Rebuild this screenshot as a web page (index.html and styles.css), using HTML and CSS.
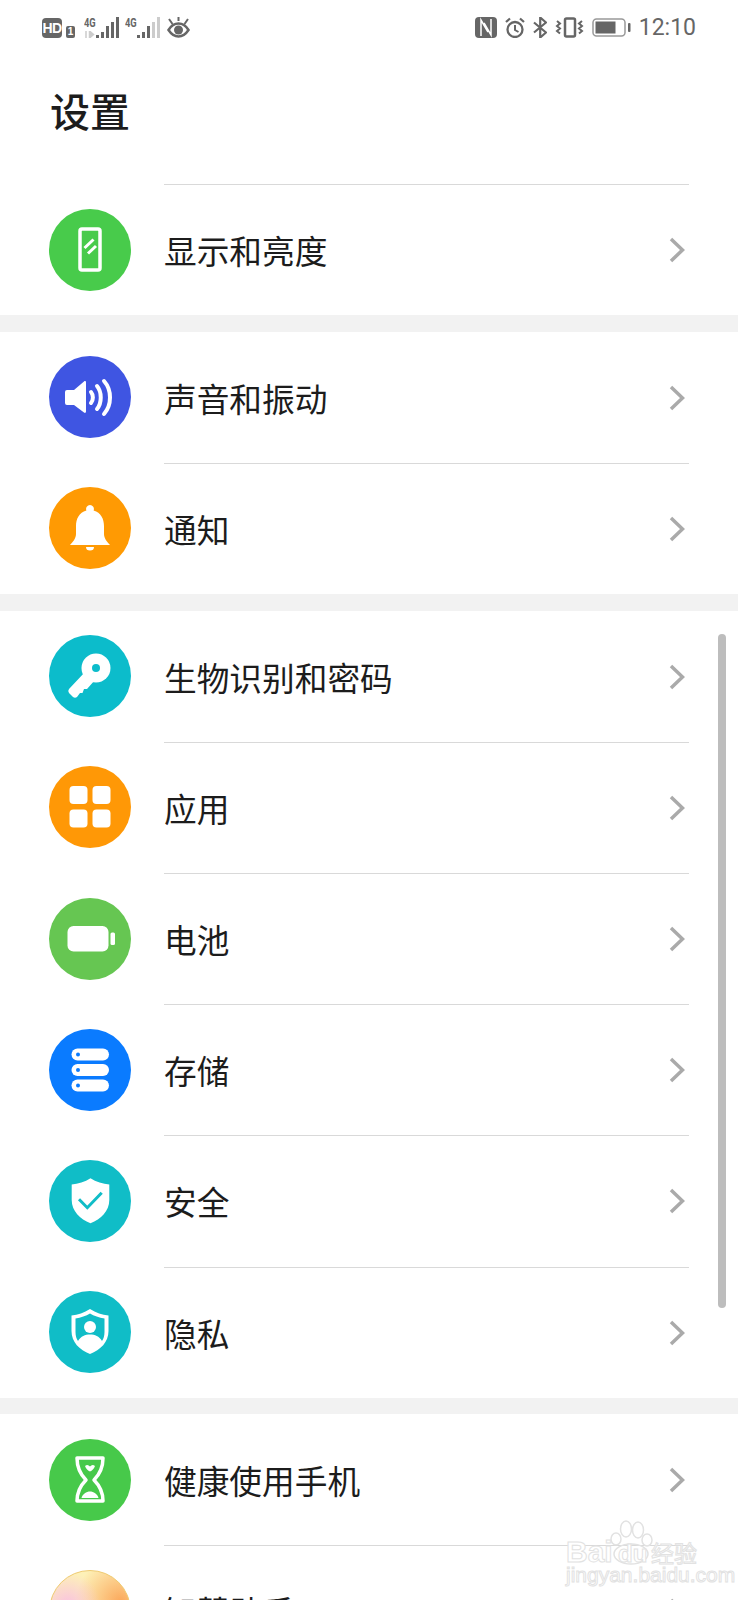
FILE: index.html
```html
<!DOCTYPE html>
<html>

<head>
    <title>设置</title>
    <link rel="stylesheet" href="styles.css">
</head>

<body>
    <div class="pantalla">
        <div class="estado">
            <div class="estadoIzq">
                <span class="hd">HD</span>
                <span class="sim">1</span>
                <div class="red">
                    <div class="redTexto">
                        <span class="cuatroG">4G</span>
                        <svg width="11" height="7" viewBox="0 0 11 7">
                            <path d="M2 0v7M5.5 0v7l4-3.500z" stroke="#ccc" stroke-width="1.5" fill="#ccc" />
                        </svg>
                    </div>
                    <svg width="23" height="21" viewBox="0 0 23 21" fill="#666">
                        <rect x="0" y="18" width="3" height="3" />
                        <rect x="5" y="15" width="3" height="6" />
                        <rect x="10" y="9" width="3" height="12" />
                        <rect x="15" y="5" width="3" height="16" />
                        <rect x="20" y="0" width="3" height="21" />
                    </svg>
                </div>
                <div class="red">
                    <div class="redTexto">
                        <span class="cuatroG">4G</span>
                    </div>
                    <svg width="23" height="21" viewBox="0 0 23 21" fill="#666">
                        <rect x="0" y="18" width="3" height="3" />
                        <rect x="5" y="15" width="3" height="6" />
                        <rect x="10" y="9" width="3" height="12" />
                        <rect x="15" y="5" width="3" height="16" fill="#ccc" />
                        <rect x="20" y="0" width="3" height="21" fill="#ccc" />
                    </svg>
                </div>
                <svg width="23" height="21" viewBox="0 0 23 21" fill="none" stroke="#666" stroke-width="2.5">
                    <path d="M1.500 13C4.500 8 8 6.500 11.500 6.500S18.500 8 21.500 13c-3 4.500-6.500 6.500-10 6.500S4.500 17.500 1.500 13z" />
                    <circle cx="11.500" cy="13" r="4.500" fill="#666" stroke="none" />
                    <path d="M2 2l3.500 5M11.500 0v4M21 2l-3.500 5" stroke-width="2" />
                </svg>
            </div>
            <div class="estadoDer">
                <svg width="22" height="21" viewBox="0 0 22 21">
                    <rect x="0" y="0" width="22" height="21" rx="4" fill="#666" />
                    <path d="M6 19V3l7 12M16 2v16L9 6" fill="none" stroke="#fff" stroke-width="1.5" />
                </svg>
                <svg width="20" height="21" viewBox="0 0 20 21" fill="none" stroke="#666" stroke-width="2.3">
                    <circle cx="10" cy="12.500" r="7.500" />
                    <path d="M10 8v5l3.500 2" stroke-width="2" />
                    <path d="M1 5l4-3.500M19 5l-4-3.500" />
                </svg>
                <svg width="14" height="21" viewBox="0 0 14 21" fill="none" stroke="#666" stroke-width="2.2">
                    <path d="M1 5.500l12 10-5.800 5V.5L13 5.500l-12 10" />
                </svg>
                <svg width="29" height="21" viewBox="0 0 29 21" fill="none" stroke="#666" stroke-width="2.5">
                    <rect x="10" y="1.500" width="10" height="18" rx="1.500" />
                    <path d="M2 4l3 2.500-3 2.500 3 2.500-3 2.500 3 2.500M27 4l-3 2.500 3 2.500-3 2.500 3 2.500-3 2.500" stroke-width="2" />
                </svg>
                <svg width="39" height="19" viewBox="0 0 39 19">
                    <rect x="1" y="1" width="32" height="17" rx="3.500" fill="none" stroke="#999" stroke-width="1.5" />
                    <rect x="3.500" y="3.500" width="20" height="12" fill="#666" />
                    <rect x="36" y="5" width="2.500" height="9" rx="1" fill="#666" />
                </svg>
                <span class="hora">12:10</span>
            </div>
        </div>

        <h1 class="titulo">设置</h1>

        <div class="grupo">
            <div class="fila">
                <svg class="icono" viewBox="0 0 82 82">
                    <circle cx="41" cy="41" r="41" fill="#48cb4b" />
                    <rect x="31" y="20" width="20" height="41" rx="2" fill="none" stroke="#fff" stroke-width="3.5" />
                    <path d="M35.500 39l9-8.500M39 44.500l8-7.500" stroke="#fff" stroke-width="3" />
                </svg>
                <div class="cuerpo">
                    <span class="nombre">显示和亮度</span>
                    <svg class="flecha" viewBox="0 0 16 26"><path d="M2 2l11.500 11L2 24" /></svg>
                </div>
            </div>
        </div>

        <div class="grupo">
            <div class="fila primera">
                <svg class="icono" viewBox="0 0 82 82">
                    <circle cx="41" cy="41" r="41" fill="#3f55e2" />
                    <path d="M18 34h7l10-8.500c1-.8 2-.3 2 1v29c0 1.300-1 1.800-2 1L25 49h-7a2 2 0 0 1-2-2V36a2 2 0 0 1 2-2z" fill="#fff" />
                    <path d="M42 36c2.500 3 2.500 8 0 11M48 30c5 6 5 17 0 23M55 25c8 9 8 24 0 33" fill="none" stroke="#fff" stroke-width="4" stroke-linecap="round" />
                </svg>
                <div class="cuerpo">
                    <span class="nombre">声音和振动</span>
                    <svg class="flecha" viewBox="0 0 16 26"><path d="M2 2l11.500 11L2 24" /></svg>
                </div>
            </div>
            <div class="fila">
                <svg class="icono" viewBox="0 0 82 82">
                    <circle cx="41" cy="41" r="41" fill="#ff9a03" />
                    <path d="M41 18a4 4 0 0 1 3.600 5.500C52 25.500 55 32 55 39v8c0 4 3 8 6 11H21c3-3 6-7 6-11v-8c0-7 3-13.500 10.400-15.500A4 4 0 0 1 41 18z" fill="#fff" />
                    <path d="M37 60h8a4 3.500 0 0 1-8 0z" fill="#fff" />
                </svg>
                <div class="cuerpo">
                    <span class="nombre">通知</span>
                    <svg class="flecha" viewBox="0 0 16 26"><path d="M2 2l11.500 11L2 24" /></svg>
                </div>
            </div>
        </div>

        <div class="grupo">
            <div class="fila primera">
                <svg class="icono" viewBox="0 0 82 82">
                    <circle cx="41" cy="41" r="41" fill="#0cbccb" />
                    <circle cx="47" cy="33" r="14.500" fill="#fff" />
                    <path d="M36 37L20 54q-1.500 2 0 4l4 4q2 1.500 4 0l3-4h2.500l1.500-4h3l8-9z" fill="#fff" />
                    <circle cx="47" cy="33" r="4" fill="#0cbccb" />
                </svg>
                <div class="cuerpo">
                    <span class="nombre">生物识别和密码</span>
                    <svg class="flecha" viewBox="0 0 16 26"><path d="M2 2l11.500 11L2 24" /></svg>
                </div>
            </div>
            <div class="fila">
                <svg class="icono" viewBox="0 0 82 82" fill="#fff">
                    <circle cx="41" cy="41" r="41" fill="#ff9806" />
                    <rect x="20.500" y="20" width="18" height="18" rx="4" />
                    <rect x="43.500" y="20" width="18" height="18" rx="4" />
                    <rect x="20.500" y="43.500" width="18" height="18" rx="4" />
                    <rect x="43.500" y="43.500" width="18" height="18" rx="4" />
                </svg>
                <div class="cuerpo">
                    <span class="nombre">应用</span>
                    <svg class="flecha" viewBox="0 0 16 26"><path d="M2 2l11.500 11L2 24" /></svg>
                </div>
            </div>
            <div class="fila">
                <svg class="icono" viewBox="0 0 82 82" fill="#fff">
                    <circle cx="41" cy="41" r="41" fill="#66c652" />
                    <rect x="18.500" y="28" width="41" height="25.500" rx="6" />
                    <rect x="61.500" y="34.500" width="4.500" height="12.500" rx="1.500" />
                </svg>
                <div class="cuerpo">
                    <span class="nombre">电池</span>
                    <svg class="flecha" viewBox="0 0 16 26"><path d="M2 2l11.500 11L2 24" /></svg>
                </div>
            </div>
            <div class="fila">
                <svg class="icono" viewBox="0 0 82 82" fill="#fff">
                    <circle cx="41" cy="41" r="41" fill="#0a7bff" />
                    <rect x="22.500" y="19.500" width="37.500" height="12" rx="6" />
                    <rect x="22.500" y="35" width="37.500" height="12" rx="6" />
                    <rect x="22.500" y="50.500" width="37.500" height="12" rx="6" />
                    <circle cx="29" cy="25.500" r="2" fill="#0a7bff" />
                    <circle cx="29" cy="41" r="2" fill="#0a7bff" />
                    <circle cx="29" cy="56.500" r="2" fill="#0a7bff" />
                </svg>
                <div class="cuerpo">
                    <span class="nombre">存储</span>
                    <svg class="flecha" viewBox="0 0 16 26"><path d="M2 2l11.500 11L2 24" /></svg>
                </div>
            </div>
            <div class="fila">
                <svg class="icono" viewBox="0 0 82 82">
                    <circle cx="41" cy="41" r="41" fill="#10bdc7" />
                    <path d="M41.500 18.300C47 22 54 24 60.300 24.500V40C60.300 51 52 59 41.500 63.300 31 59 22.700 51 22.700 40V24.500C29 24 36 22 41.500 18.300z" fill="#fff" />
                    <path d="M30 39.300l8.300 8.400 14.400-15" fill="none" stroke="#10bdc7" stroke-width="3" />
                </svg>
                <div class="cuerpo">
                    <span class="nombre">安全</span>
                    <svg class="flecha" viewBox="0 0 16 26"><path d="M2 2l11.500 11L2 24" /></svg>
                </div>
            </div>
            <div class="fila">
                <svg class="icono" viewBox="0 0 82 82">
                    <circle cx="41" cy="41" r="41" fill="#10bdc7" />
                    <path d="M41 18C47 22 53 23.500 59.500 24.500V40C59.500 51 51.500 59 41 63 30.500 59 22.500 51 22.500 40V24.500C29 23.500 35 22 41 18z" fill="#fff" />
                    <path d="M41 22.500C45 25 50 26.500 55.500 27.500V41C55.500 45 54.500 48 53 50 50 45 46 43.500 41 43.500 36 43.500 32 45 29 50 27.500 48 26.500 45 26.500 41V27.500C32 26.500 37 25 41 22.500z" fill="#10bdc7" />
                    <circle cx="41" cy="36" r="6" fill="#fff" />
                </svg>
                <div class="cuerpo">
                    <span class="nombre">隐私</span>
                    <svg class="flecha" viewBox="0 0 16 26"><path d="M2 2l11.500 11L2 24" /></svg>
                </div>
            </div>
        </div>

        <div class="grupo">
            <div class="fila primera">
                <svg class="icono" viewBox="0 0 82 82">
                    <circle cx="41" cy="41" r="41" fill="#47c94a" />
                    <path d="M28 19H54C54 29 50 36 45 41 50 46 54 53 54 62H28C28 53 32 46 37 41 32 36 28 29 28 19z" fill="none" stroke="#fff" stroke-width="3.500" stroke-linejoin="round" />
                    <path d="M36 27c2-1.500 3.500-1 5 .5 1.500-1.500 3-2 5-.5-1 3-3 4.500-5 5.500-2-1-4-2.500-5-5.500z" fill="#fff" />
                    <path d="M32.500 59c1-4 5-6.500 8.500-6.500s7.500 2.500 8.500 6.500z" fill="#fff" />
                </svg>
                <div class="cuerpo">
                    <span class="nombre">健康使用手机</span>
                    <svg class="flecha" viewBox="0 0 16 26"><path d="M2 2l11.500 11L2 24" /></svg>
                </div>
            </div>
            <div class="fila">
                <div class="icono bola"></div>
                <div class="cuerpo">
                    <span class="nombre">智慧助手</span>
                    <svg class="flecha" viewBox="0 0 16 26"><path d="M2 2l11.500 11L2 24" /></svg>
                </div>
            </div>
        </div>

        <div class="scroll"></div>

        <div class="marca">
            <svg class="huella" width="44" height="46" viewBox="0 0 44 46" fill="#fff" stroke="#e2e2e2" stroke-width="1.5">
                <ellipse cx="6" cy="19" rx="5" ry="6" />
                <ellipse cx="16" cy="9" rx="5.500" ry="8" />
                <ellipse cx="28" cy="10" rx="5.500" ry="8" />
                <ellipse cx="37" cy="20" rx="5" ry="6" />
                <ellipse cx="21" cy="34" rx="17" ry="10" fill="none" />
            </svg>
            <div class="marcaFila">
                <span class="bai">Bai</span><span class="du">du</span><span class="jing">经验</span>
            </div>
            <div class="marcaUrl">jingyan.baidu.com</div>
        </div>
    </div>
</body>

</html>
```
FILE: styles.css
```css
html,
body {
    margin: 0;
    padding: 0;
    background-color: #fff;
}

.pantalla {
    position: relative;
    width: 738px;
    height: 1600px;
    overflow: hidden;
    background-color: #f2f2f2;
    font-family: "Noto Sans CJK SC", "Noto Sans", sans-serif;
    color: #1c1c1c;
}

/* barra de estado */
.estado {
    display: flex;
    justify-content: space-between;
    align-items: center;
    height: 21px;
    padding: 17px 42px 0 42px;
    background-color: #fff;
}

.estadoIzq,
.estadoDer {
    display: flex;
    align-items: center;
}

.estadoDer {
    gap: 8px;
}

.hd {
    width: 20px;
    height: 20px;
    border-radius: 4px;
    background-color: #666;
    color: #fff;
    font: bold 14px/20px "Liberation Sans", sans-serif;
    letter-spacing: -0.5px;
    text-align: center;
}

.sim {
    width: 9px;
    height: 12px;
    margin: 8px 9px 0 4px;
    border-radius: 2px;
    background-color: #666;
    color: #fff;
    font: bold 10px/12px "Liberation Sans", sans-serif;
    text-align: center;
}

.red {
    display: flex;
    align-items: flex-end;
    margin-right: 6px;
}

.red + .red {
    margin-right: 7px;
}

.redTexto {
    display: flex;
    flex-direction: column;
    justify-content: space-between;
    align-items: flex-start;
    width: 12px;
    height: 21px;
}

.cuatroG {
    color: #666;
    font: bold 13px/11px "Roboto", sans-serif;
    transform: scaleX(0.72);
    transform-origin: left;
}

.hora {
    color: #666;
    font: 23px/21px "Roboto", sans-serif;
}

.titulo {
    height: 98px;
    margin: 0;
    padding: 48px 0 0 50px;
    background-color: #fff;
    font-size: 40px;
    font-weight: 500;
    line-height: 48px;
}

/* grupos de la lista */
.grupo + .grupo {
    margin-top: 16.5px;
}

.fila {
    display: flex;
    align-items: center;
    height: 131.2px;
    padding-left: 49px;
    background-color: #fff;
}

.icono {
    flex: none;
    width: 82px;
    height: 82px;
}

.bola {
    box-sizing: border-box;
    border: 1px solid #efcb72;
    border-radius: 50%;
    background:
        radial-gradient(circle at 22% 42%, #f9c2e0 0, rgba(249, 194, 224, 0) 42%),
        radial-gradient(circle at 88% 38%, #fba95c 0, rgba(251, 169, 92, 0) 52%),
        #fdf1b8;
}

.cuerpo {
    flex: 1;
    align-self: stretch;
    display: flex;
    justify-content: space-between;
    align-items: center;
    box-sizing: border-box;
    margin: 0 49px 0 33px;
    border-top: 1px solid #d9d9d9;
}

.primera .cuerpo {
    border-top-color: transparent;
}

.nombre {
    font-size: 32.7px;
    line-height: 44px;
}

.flecha {
    width: 16px;
    height: 26px;
    margin-right: 4px;
    fill: none;
    stroke: #aaa;
    stroke-width: 3.5px;
}

.scroll {
    position: absolute;
    left: 718px;
    top: 634px;
    width: 8px;
    height: 674px;
    border-radius: 4px;
    background-color: #bdbdbd;
}

/* marca de agua */
.marca {
    position: absolute;
    left: 566px;
    top: 1520px;
    width: 134px;
    color: #fff;
    -webkit-text-stroke: 1px #e2e2e2;
}

.huella {
    position: absolute;
    left: 44px;
    top: 0;
}

.marcaFila {
    display: flex;
    align-items: baseline;
    margin-top: 19px;
    font: bold 30px/26px "Liberation Sans", sans-serif;
}

.bai {
    width: 52px;
}

.du {
    position: relative;
    width: 33px;
    font-size: 24px;
}

.jing {
    font: 23px/26px "Noto Sans CJK SC", sans-serif;
}

.marcaUrl {
    font: 21px/16px "Liberation Sans", sans-serif;
    white-space: nowrap;
}
```
